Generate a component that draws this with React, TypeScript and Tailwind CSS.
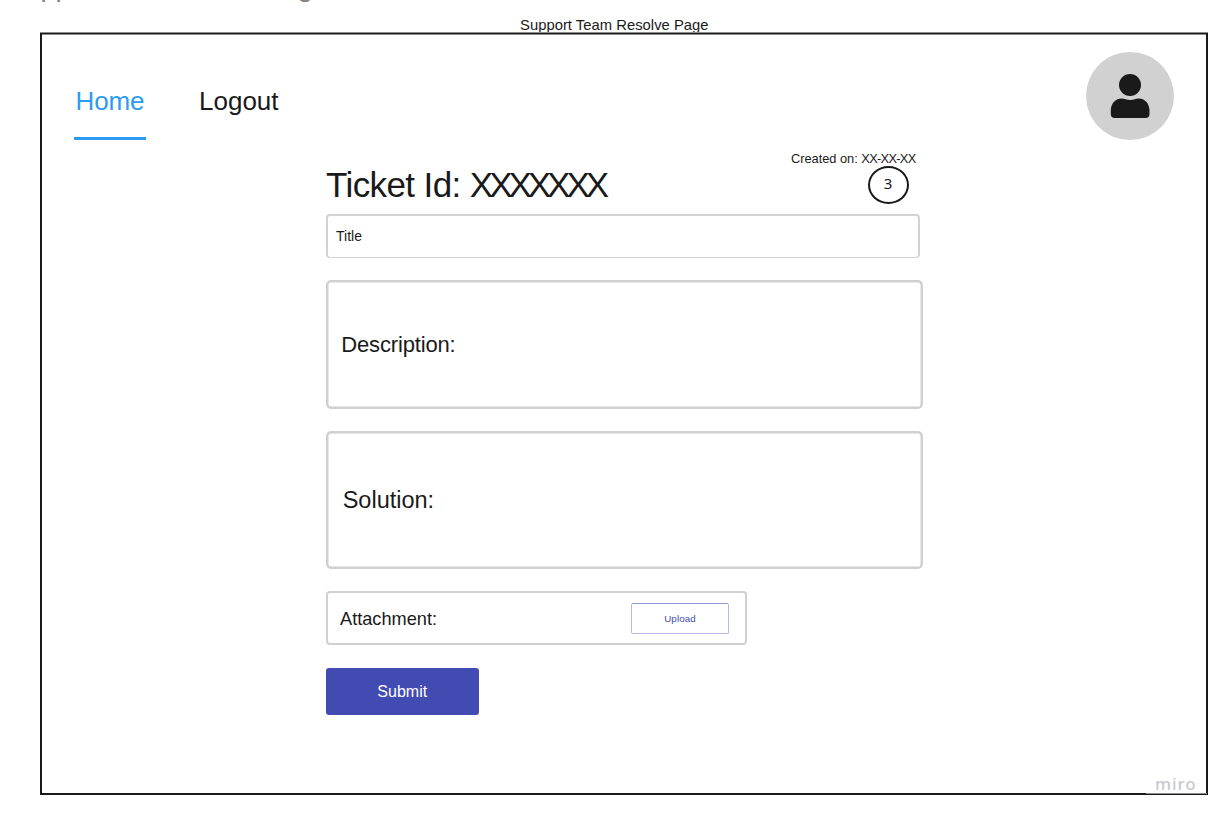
import type { ReactNode } from "react";

function Avatar() {
  return (
    <svg className="h-[88px] w-[88px] shrink-0" viewBox="0 0 88 88" aria-label="Profile">
      <circle cx="44" cy="44" r="44" fill="#d1d1d1" />
      <circle cx="44" cy="33" r="11" fill="#1a1a1a" />
      <path
        d="M24.8 62V58.5C24.8 51.2 29.8 46.4 35.5 46.4C39 46.4 40.3 48 44.2 48C48 48 49.4 46.4 52.8 46.4C58.6 46.4 63.5 51.2 63.5 58.5V62Q63.5 66 59.5 66H28.8Q24.8 66 24.8 62Z"
        fill="#1a1a1a"
      />
    </svg>
  );
}

function Field({ className, children }: { className: string; children: ReactNode }) {
  return <div className={`flex items-start leading-none ${className}`}>{children}</div>;
}

export default function App() {
  return (
    <div className="flex h-[818px] w-[1222px] flex-col overflow-hidden bg-white font-['Liberation_Sans',Arial,sans-serif] text-[#1a1a1a]">
      <header className="h-8 shrink-0 whitespace-nowrap leading-none">
        <div className="-mt-[27px] ml-[7px] h-7 text-[28px] tracking-[-0.4px] text-[#808080]">Support Team Home Page</div>
        <div className="ml-[520px] mt-[17px] text-[14.8px] tracking-[0.02px]">Support Team Resolve Page</div>
      </header>

      <main className="relative ml-10 h-[763px] w-[1168px] shrink-0 border-t border-[#8c8c8c]">
        <div className="h-[762px] border-x-2 border-b-2 border-t border-[#1a1a1a]">
          <div className="h-full border-t border-[#8c8c8c]">
            <div className="flex h-[115px] items-start justify-between pl-8 pr-8 pt-[17px]">
              <nav className="flex gap-[53px] text-[26px] leading-none">
                <a className="h-[88px] w-[72px] border-b-[3px] border-[#2d9bf0] pl-[1.5px] pt-[36px] tracking-[-0.15px] text-[#2d9bf0]">Home</a>
                <a className="pt-[36px]">Logout</a>
              </nav>
              <Avatar />
            </div>

            <div className="-mt-[4px] ml-[284px] w-[597px]">
              <div className="flex h-[68px] justify-between">
                <h1 className="whitespace-nowrap pt-[21px] text-[35px] leading-none tracking-[-0.6px]">
                  Ticket Id: <span className="tracking-[-4.02px]">XXXXXXX</span>
                </h1>
                <div className="flex flex-col items-end pr-[7px] pt-[7px]">
                  <p className="mr-[0.5px] whitespace-nowrap text-[12.8px] leading-none">
                    Created on: <span className="tracking-[-0.7px]">XX-XX-XX</span>
                  </p>
                  <div className="mr-[7.5px] flex h-[38px] w-[41px] items-center justify-center rounded-[50%] border-2 border-[#1a1a1a] pb-[2px] font-['Noto_Sans',sans-serif] text-[15px] leading-none">
                    3
                  </div>
                </div>
              </div>

              <Field className="h-[44px] w-[594px] rounded-[4px] border-2 border-b border-[#d2d2d2] pl-[8px] pt-[13px] text-[14px]">
                Title
              </Field>
              <Field className="mt-[22px] h-[128.7px] w-[597px] rounded-[5px] pl-[15.3px] pt-[54px] text-[22px] tracking-[-0.16px] shadow-[inset_0_0_0_2.5px_#d0d0d0]">
                Description:
              </Field>
              <Field className="mt-[22px] h-[138.3px] w-[597px] rounded-[5px] pl-[16.7px] pt-[58px] text-[23.5px] shadow-[inset_0_0_0_2.5px_#d0d0d0]">
                Solution:
              </Field>
              <Field className="mt-[22px] h-[54px] w-[421px] justify-between rounded-[4px] border-2 border-[#d0d0d0] pl-[12px] pr-[16px] pt-[10px] text-[18.2px]">
                <span className="pt-[7px]">Attachment:</span>
                <button className="h-[31px] w-[98px] rounded-[2px] border border-[#b4b8e6] border-t-[#9198d8] pt-[1px] text-[9.8px] leading-none tracking-[0.1px] text-[#424bb2]">
                  Upload
                </button>
              </Field>
              <button className="mt-[23px] block h-[47px] w-[152.5px] rounded-[3px] bg-[#424bb2] pt-[1px] text-[16px] leading-none text-white">
                Submit
              </button>
            </div>
          </div>
        </div>
        <div className="absolute bottom-[1px] right-[1px] h-[22px] w-[61px] border-b border-[#8c8c8c] pl-[9px] pt-[3px] font-['Noto_Sans',sans-serif] text-[17px] font-medium leading-none tracking-[0.9px] text-[#c8c8d2]">
          miro
        </div>
      </main>
    </div>
  );
}
